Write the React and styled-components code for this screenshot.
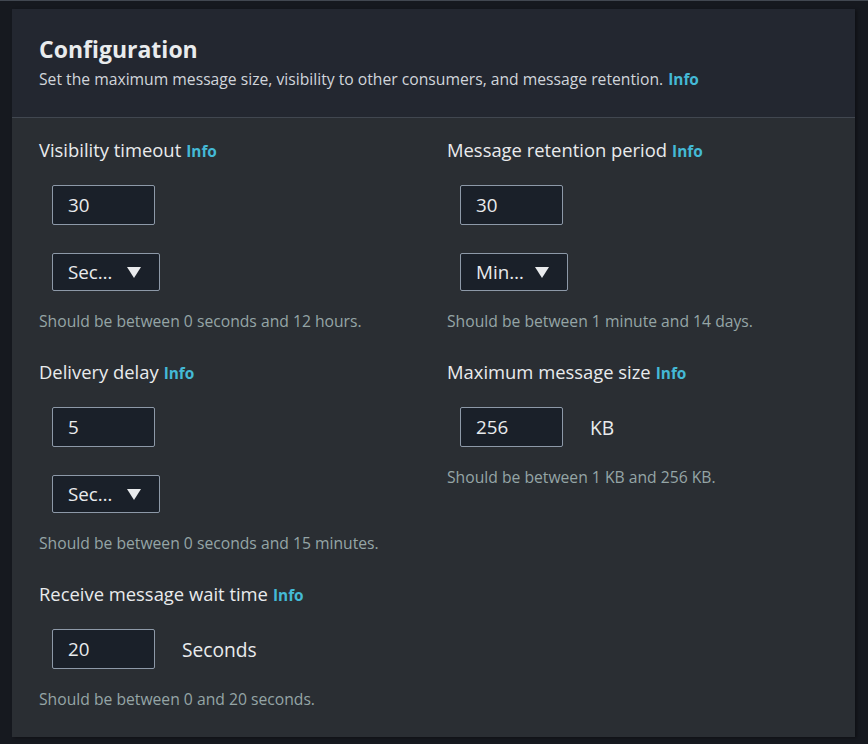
import React from 'react';
import styled, { createGlobalStyle } from 'styled-components';

const GlobalStyle = createGlobalStyle`
  html, body {
    margin: 0;
    padding: 0;
    background: #16191f;
  }
  body {
    font-family: "Open Sans", "Noto Sans", sans-serif;
    color: #e9ebed;
  }
`;

const Page = styled.div`
  min-height: 744px;
  box-sizing: border-box;
  border-top: 1px solid #414750;
  padding: 8px 13px 0 12px;
`;

const Card = styled.section`
  background: #2a2e33;
  box-shadow: 2px 1px 3px rgba(0, 0, 0, 0.35);
`;

const CardHeader = styled.header`
  background: #232730;
  border-bottom: 1px solid #414750;
  padding: 26px 27px 27px;
`;

const Title = styled.h2`
  margin: 0;
  font-size: 23px;
  line-height: 28px;
  font-weight: 700;
  color: #e9ebed;
`;

const Subtitle = styled.p`
  margin: 6px 0 0;
  font-size: 15.7px;
  line-height: 20px;
  color: #d1d5db;
`;

const Info = styled.a`
  font-weight: 700;
  font-size: 15.4px;
  color: #44b9d6;
  text-decoration: none;
  margin-left: 5px;
`;

const Body = styled.div`
  display: grid;
  grid-template-columns: 1fr 1fr;
  column-gap: 27px;
  padding: 21px 27px 28px;
`;

const Column = styled.div`
  display: flex;
  flex-direction: column;
  gap: 30px;
`;

const Field = styled.div`
  display: flex;
  flex-direction: column;
`;

const Label = styled.div`
  font-size: 18.4px;
  line-height: 22px;
  color: #e9ebed;
  margin-bottom: 22px;
`;

const Controls = styled.div`
  display: flex;
  flex-direction: column;
  gap: 28px;
  padding-left: 13px;
`;

const InputRow = styled.div`
  display: flex;
  align-items: center;
  gap: 27px;
`;

const Input = styled.div`
  box-sizing: border-box;
  width: 103px;
  height: 40px;
  padding: 0 15px;
  display: flex;
  align-items: center;
  background: #1a2029;
  border: 1px solid #8d99a8;
  border-radius: 2px;
  font-size: 18.8px;
  color: #e9ebed;
`;

const Select = styled(Input)`
  width: 108px;
  height: 38px;
  justify-content: space-between;
  padding-right: 18px;
`;

const Caret = styled.svg`
  width: 14px;
  height: 11px;
  fill: #e9ebed;
`;

const Unit = styled.span`
  font-size: 19.2px;
  color: #e9ebed;
`;

const Help = styled.div`
  margin-top: 20px;
  font-size: 15.7px;
  line-height: 20px;
  color: #95a5a6;
`;

const Dropdown = ({ value }) => (
  <Select>
    <span>{value}</span>
    <Caret viewBox="0 0 14 11">
      <path d="M0 0h14L7 11z" />
    </Caret>
  </Select>
);

const ConfigField = ({ label, value, unit, select, help }) => (
  <Field>
    <Label>
      {label}
      <Info>Info</Info>
    </Label>
    <Controls>
      <InputRow>
        <Input>{value}</Input>
        {unit && <Unit>{unit}</Unit>}
      </InputRow>
      {select && <Dropdown value={select} />}
    </Controls>
    <Help>{help}</Help>
  </Field>
);

export default function App() {
  return (
    <Page>
      <GlobalStyle />
      <Card>
        <CardHeader>
          <Title>Configuration</Title>
          <Subtitle>
            Set the maximum message size, visibility to other consumers, and message retention.
            <Info>Info</Info>
          </Subtitle>
        </CardHeader>
        <Body>
          <Column>
            <ConfigField
              label="Visibility timeout"
              value="30"
              select="Sec…"
              help="Should be between 0 seconds and 12 hours."
            />
            <ConfigField
              label="Delivery delay"
              value="5"
              select="Sec…"
              help="Should be between 0 seconds and 15 minutes."
            />
            <ConfigField
              label="Receive message wait time"
              value="20"
              unit="Seconds"
              help="Should be between 0 and 20 seconds."
            />
          </Column>
          <Column>
            <ConfigField
              label="Message retention period"
              value="30"
              select="Min…"
              help="Should be between 1 minute and 14 days."
            />
            <ConfigField
              label="Maximum message size"
              value="256"
              unit="KB"
              help="Should be between 1 KB and 256 KB."
            />
          </Column>
        </Body>
      </Card>
    </Page>
  );
}
